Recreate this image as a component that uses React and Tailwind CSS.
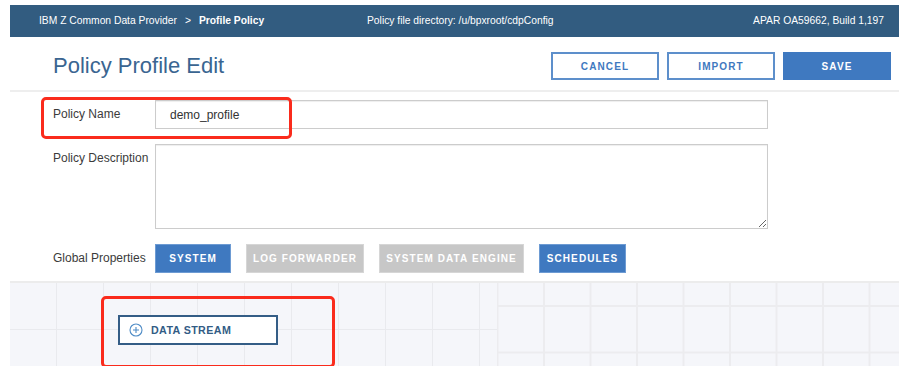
import React from "react";

const blueBtn =
  "h-[29px] bg-[#3f79c0] border border-[#6d9bd3] text-white text-[10px] font-bold tracking-[1.1px] flex items-center justify-center";
const grayBtn =
  "h-[29px] bg-[#c7c7c7] border border-[#d6d6d6] text-white text-[10px] font-bold tracking-[1.1px] flex items-center justify-center";

function PlusCircle() {
  return (
    <svg width="14" height="14" viewBox="0 0 14 14" fill="none">
      <circle cx="7" cy="7" r="6" stroke="#4f8cc6" strokeWidth="1.1" />
      <path d="M7 4v6M4 7h6" stroke="#4f8cc6" strokeWidth="1.1" />
    </svg>
  );
}

export default function App() {
  return (
    <div className="relative h-[366px] w-[899px] overflow-hidden bg-white pl-[10px] pt-[5px] font-['Liberation_Sans',Arial,sans-serif]">
      {/* Header bar */}
      <div className="flex h-[32px] items-center bg-[#325c80] text-[10.3px] text-white">
        <div className="flex w-[357px] items-center pl-[29px]">
          <span>IBM Z Common Data Provider</span>
          <span className="mx-[8px]">&gt;</span>
          <span className="font-bold">Profile Policy</span>
        </div>
        <div className="flex-1">Policy file directory: /u/bpxroot/cdpConfig</div>
        <div className="pr-[15px]">APAR OA59662, Build 1,197</div>
      </div>

      {/* Title row */}
      <div className="flex h-[55px] items-start justify-between border-b-2 border-[#eeeeee] pl-[43px] pr-[8px]">
        <h1 className="mt-[16px] text-[22px] font-normal leading-[25px] text-[#3a6591]">Policy Profile Edit</h1>
        <div className="mt-[15px] flex gap-[8px]">
          <button className="flex h-[28px] w-[108px] items-center justify-center border-2 border-[#5d8fcb] bg-white text-[10px] font-bold tracking-[1.1px] text-[#3f79c0]">
            CANCEL
          </button>
          <button className="flex h-[28px] w-[108px] items-center justify-center border-2 border-[#5d8fcb] bg-white text-[10px] font-bold tracking-[1.1px] text-[#3f79c0]">
            IMPORT
          </button>
          <button className="flex h-[28px] w-[108px] items-center justify-center bg-[#3f79c0] text-[10px] font-bold tracking-[1.1px] text-white">
            SAVE
          </button>
        </div>
      </div>

      {/* Form */}
      <div className="flex flex-col gap-[15px] pl-[43px] pt-[8px]">
        <div className="flex">
          <div className="w-[102px] pt-[7px] text-[12px] leading-[15px] text-[#3b3b3b]">Policy Name</div>
          <div className="flex h-[29px] w-[613px] items-center border border-[#cccccc] pl-[14px] text-[12px] text-[#333333] shadow-[inset_0_1px_1px_rgba(0,0,0,0.07)]">
            demo_profile
          </div>
        </div>
        <div className="flex">
          <div className="w-[102px] pt-[7px] text-[12px] leading-[15px] text-[#3b3b3b]">Policy Description</div>
          <textarea className="block h-[85px] w-[613px] border border-[#cccccc] shadow-[inset_0_1px_1px_rgba(0,0,0,0.07)] outline-none" />
        </div>
        <div className="flex items-center">
          <div className="w-[102px] text-[12px] leading-[15px] text-[#3b3b3b]">Global Properties</div>
          <div className="flex gap-[15px]">
            <div className={`${blueBtn} w-[76px]`}>SYSTEM</div>
            <div className={`${grayBtn} w-[118px]`}>LOG FORWARDER</div>
            <div className={`${grayBtn} w-[145px]`}>SYSTEM DATA ENGINE</div>
            <div className={`${blueBtn} w-[87px]`}>SCHEDULES</div>
          </div>
        </div>
      </div>

      {/* Canvas */}
      <div className="mt-[8px] border-t-2 border-[#ececec]">
        <div className="relative flex h-[90px] bg-[#f5f6fa]">
          <div className="h-full w-[487px] bg-[#f5f6fa] bg-[linear-gradient(to_right,transparent_46px,#e9eaee_46px,#e9eaee_47px),linear-gradient(to_bottom,transparent_46px,#e9eaee_46px,#e9eaee_47px)] bg-[size:47px_47px]" />
          <div className="h-full flex-1 bg-[#f5f6fa] bg-[linear-gradient(to_right,#ececef_2px,transparent_2px),linear-gradient(to_bottom,#ececef_2px,transparent_2px)] bg-[size:46.5px_46.5px] bg-[position:46px_22px]" />
          <div className="absolute left-[108px] top-[32px] flex h-[30px] w-[160px] items-center gap-[8px] border-2 border-[#345d86] bg-white pl-[9px]">
            <PlusCircle />
            <span className="text-[10.7px] font-bold tracking-[0.4px] text-[#325c85]">DATA STREAM</span>
          </div>
        </div>
      </div>

      {/* Red annotation boxes */}
      <div className="absolute left-[41px] top-[97px] h-[42px] w-[251px] rounded-[5px] border-[3px] border-[#fa2b1c]" />
      <div className="absolute left-[101px] top-[296px] h-[72px] w-[234px] rounded-[5px] border-[3px] border-[#fa2b1c]" />
    </div>
  );
}
